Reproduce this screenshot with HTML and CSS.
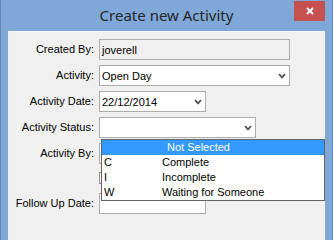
FILE: index.html
```html
<!DOCTYPE html>
<html>
<head>
<meta charset="utf-8">
<link rel="stylesheet" href="styles.css">
</head>
<body>
<div class="window">
  <div class="titlebar">
    <div class="title">Create new Activity</div>
    <div class="close">
      <svg width="8" height="8" viewBox="0 0 8 8"><path d="M1 1 L7 7 M7 1 L1 7" stroke="#fff" stroke-width="1.8" fill="none"/></svg>
    </div>
  </div>
  <div class="content">
    <div class="form">
      <div class="lbl">Created By:</div>
      <div class="field ro w191"><span>joverell</span></div>

      <div class="lbl">Activity:</div>
      <div class="field w191"><span>Open Day</span><svg class="chev" width="8" height="6" viewBox="0 0 8 6"><path d="M1 1.2 L4 4.4 L7 1.2" stroke="#555" stroke-width="1.8" fill="none"/></svg></div>

      <div class="lbl">Activity Date:</div>
      <div class="field w107"><span>22/12/2014</span><svg class="chev" width="8" height="6" viewBox="0 0 8 6"><path d="M1 1.2 L4 4.4 L7 1.2" stroke="#555" stroke-width="1.8" fill="none"/></svg></div>

      <div class="lbl">Activity Status:</div>
      <div class="combo">
        <div class="field w157"><span></span><svg class="chev" width="8" height="6" viewBox="0 0 8 6"><path d="M1 1.2 L4 4.4 L7 1.2" stroke="#555" stroke-width="1.8" fill="none"/></svg></div>
        <div class="dropdown">
          <div class="opt sel"><span class="c2 head">Not Selected</span></div>
          <div class="opt"><span class="c1">C</span><span class="c2">Complete</span></div>
          <div class="opt"><span class="c1">I</span><span class="c2">Incomplete</span></div>
          <div class="opt"><span class="c1">W</span><span class="c2">Waiting for Someone</span></div>
        </div>
      </div>

      <div class="lbl">Activity By:</div>
      <div class="field w191"><span></span></div>

      <div class="lbl"></div>
      <div class="checkrow"><div class="check"></div></div>

      <div class="lbl">Follow Up Date:</div>
      <div class="field w107"><span></span></div>
    </div>
  </div>
</div>
</body>
</html>
```

FILE: styles.css
```css
html, body {
  margin: 0;
  padding: 0;
  overflow: hidden;
  background: #7fa7d7;
}
body {
  font-family: "Liberation Sans", Arial, sans-serif;
  font-size: 11px;
  color: #000;
}
.window {
  box-sizing: border-box;
  width: 333px;
  height: 100vh;
  min-height: 201px;
  background: #7fa7d7;
  border-left: 1px solid #6288ba;
  border-right: 1px solid #6288ba;
  padding: 0 7px;
  display: flex;
  flex-direction: column;
  overflow: hidden;
}
.titlebar {
  height: 31px;
  flex: none;
  display: flex;
  align-items: flex-start;
  margin: 0 -7px;
}
.title {
  flex: 1;
  text-align: center;
  padding-left: 38px;
  font-family: "Noto Sans", "Open Sans", sans-serif;
  font-size: 15px;
  color: #262626;
  line-height: 20px;
  padding-top: 5px;
}
.close {
  width: 31px;
  height: 20px;
  margin-top: 1px;
  margin-right: 7px;
  background: #c75050;
  display: flex;
  align-items: center;
  justify-content: center;
}
.close svg {
  display: block;
}
.content {
  flex: 1 0 auto;
  background: #f0f0f0;
  border-top: 1px solid #f4f6f9;
  box-sizing: border-box;
  padding-top: 7px;
}
.form {
  display: grid;
  grid-template-columns: 86px 1fr;
  grid-template-rows: repeat(5, 21px) 19px 21px;
  column-gap: 5px;
  row-gap: 5px;
}
.lbl {
  text-align: right;
  line-height: 21px;
  white-space: nowrap;
}
.field {
  box-sizing: border-box;
  height: 21px;
  border: 1px solid #acacac;
  background: #fff;
  display: flex;
  align-items: center;
  justify-content: space-between;
  padding: 0 3px 0 2px;
  justify-self: start;
  white-space: nowrap;
}
.field.ro {
  background: #f0f0f0;
  border-color: #adadad;
}
.w191 { width: 191px; }
.w157 { width: 157px; }
.w107 { width: 107px; }
.chev {
  display: block;
  flex: none;
}
.combo {
  position: relative;
  justify-self: start;
  z-index: 2;
}
.dropdown {
  position: absolute;
  left: 2px;
  top: 22px;
  width: 224px;
  box-sizing: border-box;
  border: 1px solid #646464;
  background: #fff;
}
.opt {
  height: 15px;
  line-height: 15px;
  display: flex;
  white-space: nowrap;
}
.opt.sel {
  background: #3399ff;
  color: #fff;
}
.c1 {
  width: 60px;
  padding-left: 2px;
  box-sizing: border-box;
  flex: none;
}
.c2.head {
  padding-left: 65px;
}
.checkrow {
  display: flex;
  align-items: flex-start;
}
.check {
  width: 13px;
  height: 12px;
  box-sizing: border-box;
  border: 1px solid #8f8f8f;
  background: #fff;
  margin-top: 3px;
}
```
